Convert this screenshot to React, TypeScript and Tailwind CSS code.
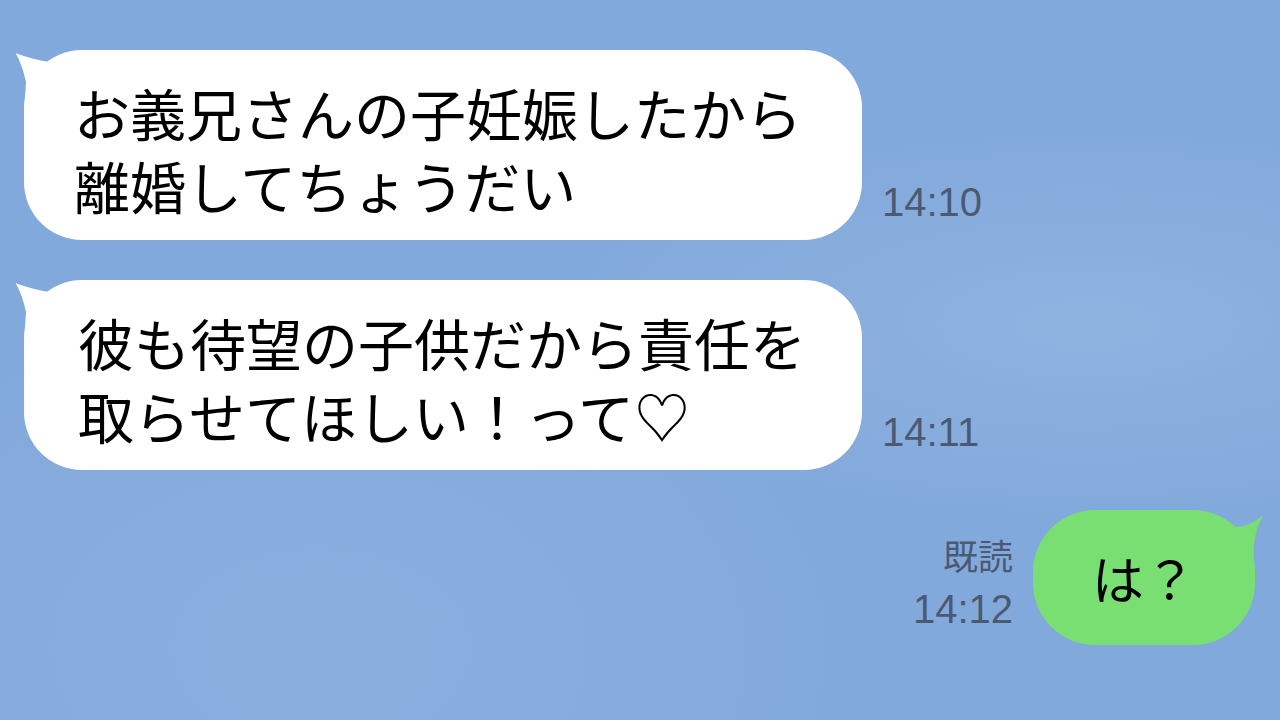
import React from "react";

const jp = { fontFamily: '"Noto Sans CJK JP", "Noto Sans", sans-serif' };
const num = { fontFamily: '"Liberation Sans", "Noto Sans CJK JP", sans-serif' };

function LeftTail() {
  return (
    <svg
      className="absolute left-[-12px] top-[-2px]"
      width="60"
      height="50"
      viewBox="0 0 60 50"
    >
      <path d="M3.7 5.3 Q 22 12 40 14.5 L 58 14 L 58 50 L 13 50 L 14 34 Q 10 16 3.7 5.3 Z" fill="#ffffff" />
    </svg>
  );
}

function RightTail() {
  return (
    <svg
      className="absolute right-[-16px] top-[-2px]"
      width="60"
      height="50"
      viewBox="0 0 60 50"
    >
      <path d="M52 7 Q 38 20 22 19 Q 10 17 2 15 L 0 15 L 0 50 L 43 50 Q 41 28 52 7 Z" fill="#7adf72" />
    </svg>
  );
}

function Received({ lines, time, pl }: { lines: string[]; time: string; pl: string }) {
  return (
    <div className="flex items-end">
      <div
        className={`relative w-[838px] h-[190px] rounded-[58px] bg-white ${pl} pt-[25px] text-[56px] leading-[73px] text-black`}
        style={jp}
      >
        <LeftTail />
        {lines.map((l, i) => (
          <div key={i} className="relative whitespace-nowrap">
            {l}
          </div>
        ))}
      </div>
      <div className="ml-[20px] mb-[18px] text-[40px] leading-[40px] text-[#4b5a72]" style={num}>
        {time}
      </div>
    </div>
  );
}

export default function App() {
  return (
    <div className="w-[1280px] h-[720px] overflow-hidden bg-[#82a9db] bg-[radial-gradient(ellipse_at_85%_45%,#8fb3e1_0%,transparent_35%),radial-gradient(ellipse_at_25%_90%,#8aafdf_0%,transparent_40%)] pl-[24px] pr-[25px] pt-[50px] flex flex-col gap-[40px]">
      <Received lines={["お義兄さんの子妊娠したから", "離婚してちょうだい"]} time="14:10" pl="pl-[50px]" />
      <Received lines={["彼も待望の子供だから責任を", "取らせてほしい！って♡"]} time="14:11" pl="pl-[54px]" />
      <div className="flex items-end justify-end">
        <div className="mr-[20px] mb-[16px] flex flex-col items-end text-[#4b5a72]">
          <div className="text-[35px] leading-[40px]" style={jp}>既読</div>
          <div className="text-[40px] leading-[40px] mt-[14px]" style={num}>14:12</div>
        </div>
        <div
          className="relative w-[222px] h-[135px] rounded-[62px] bg-[#7adf72] flex items-center justify-center text-[52px] text-black"
          style={jp}
        >
          <RightTail />
          <span className="relative">は？</span>
        </div>
      </div>
    </div>
  );
}
